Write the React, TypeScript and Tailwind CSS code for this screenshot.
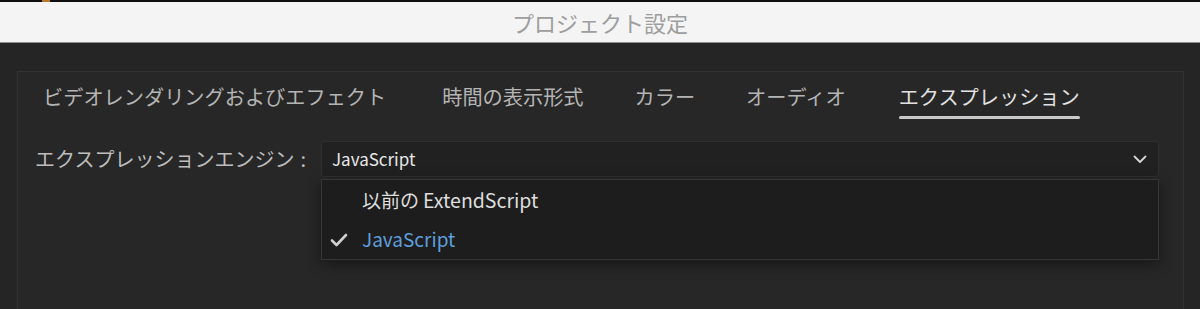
import React from "react";

const font = { fontFamily: '"Noto Sans CJK JP", "Noto Sans", sans-serif' };

export default function App() {
  const tabs = [
    { label: "ビデオレンダリングおよびエフェクト", active: false, cls: "mr-[56px]" },
    { label: "時間の表示形式", active: false, cls: "mr-[51px]" },
    { label: "カラー", active: false, cls: "mr-[51px]" },
    { label: "オーディオ", active: false, cls: "mr-[53px]" },
    { label: "エクスプレッション", active: true, cls: "" },
  ];
  return (
    <div
      className="w-[1200px] h-[309px] overflow-hidden bg-[#252525] flex flex-col"
      style={font}
    >
      <div className="h-[2px] bg-[#0e0e0e] flex">
        <div className="ml-[42px] w-[8px] bg-[#b7782c]" />
      </div>
      <div className="h-[41px] bg-[#f4f4f4] border-b border-[#8c8c8c] flex items-center justify-center">
        <span className="text-[22px] text-[#9d9d9d] leading-none">プロジェクト設定</span>
      </div>
      <div className="flex-1 pl-[17px] pr-[16px] pt-[28px] flex flex-col">
        <div className="flex-1 border-l border-t border-r border-[#323232] bg-[#272727] flex flex-col">
          <div className="flex pl-[25px] pt-[12px]">
            {tabs.map((t) => (
              <div key={t.label} className={`flex flex-col ${t.cls}`}>
                <span
                  className={`text-[20.2px] leading-[26px] whitespace-nowrap ${
                    t.active ? "text-[#e2e2e2]" : "text-[#b4b4b4]"
                  }`}
                >
                  {t.label}
                </span>
                <div
                  className={`mt-[6px] h-[3px] rounded-full ${
                    t.active ? "bg-[#c9c9c9]" : "bg-transparent"
                  }`}
                />
              </div>
            ))}
          </div>
          <div className="flex items-center mt-[22px] pl-[17px] pr-[24px]">
            <div className="w-[286px] text-[20px] text-[#bdbdbd] whitespace-nowrap leading-none flex items-center">
              <span>エクスプレッションエンジン</span>
              <span className="ml-[6px]">:</span>
            </div>
            <div className="relative flex-1">
              <div className="h-[36px] bg-[#212121] border border-[#303030] rounded-[3px] flex items-center pl-[10px] pr-[10px]">
                <span className="text-[17px] text-[#e8e8e8] flex-1">JavaScript</span>
                <svg width="14" height="9" viewBox="0 0 14 9" className="mr-[1px]">
                  <polyline
                    points="1.5,1.5 7,7 12.5,1.5"
                    fill="none"
                    stroke="#d6d6d6"
                    strokeWidth="1.8"
                    strokeLinecap="round"
                    strokeLinejoin="round"
                  />
                </svg>
              </div>
              <div className="absolute top-[38px] left-0 right-0 h-[81px] bg-[#1d1d1d] border border-[#363636] shadow-[0_4px_14px_rgba(0,0,0,0.45)] flex flex-col">
                <div className="h-[40px] flex items-center pl-[40px]">
                  <span className="text-[19px] text-[#dedede] whitespace-nowrap flex items-center">
                    <span>以前の</span>
                    <span className="ml-[4px] text-[19.5px]">ExtendScript</span>
                  </span>
                </div>
                <div className="h-[40px] flex items-center pl-[8px]">
                  <svg width="18" height="14" viewBox="0 0 18 14" className="mt-[2px]">
                    <polyline
                      points="2,7.5 6.5,12 16,2"
                      fill="none"
                      stroke="#cfcfcf"
                      strokeWidth="2.6"
                      strokeLinecap="round"
                      strokeLinejoin="round"
                    />
                  </svg>
                  <span className="ml-[14px] text-[19px] text-[#5d9fdc] whitespace-nowrap">JavaScript</span>
                </div>
              </div>
            </div>
          </div>
        </div>
      </div>
    </div>
  );
}
